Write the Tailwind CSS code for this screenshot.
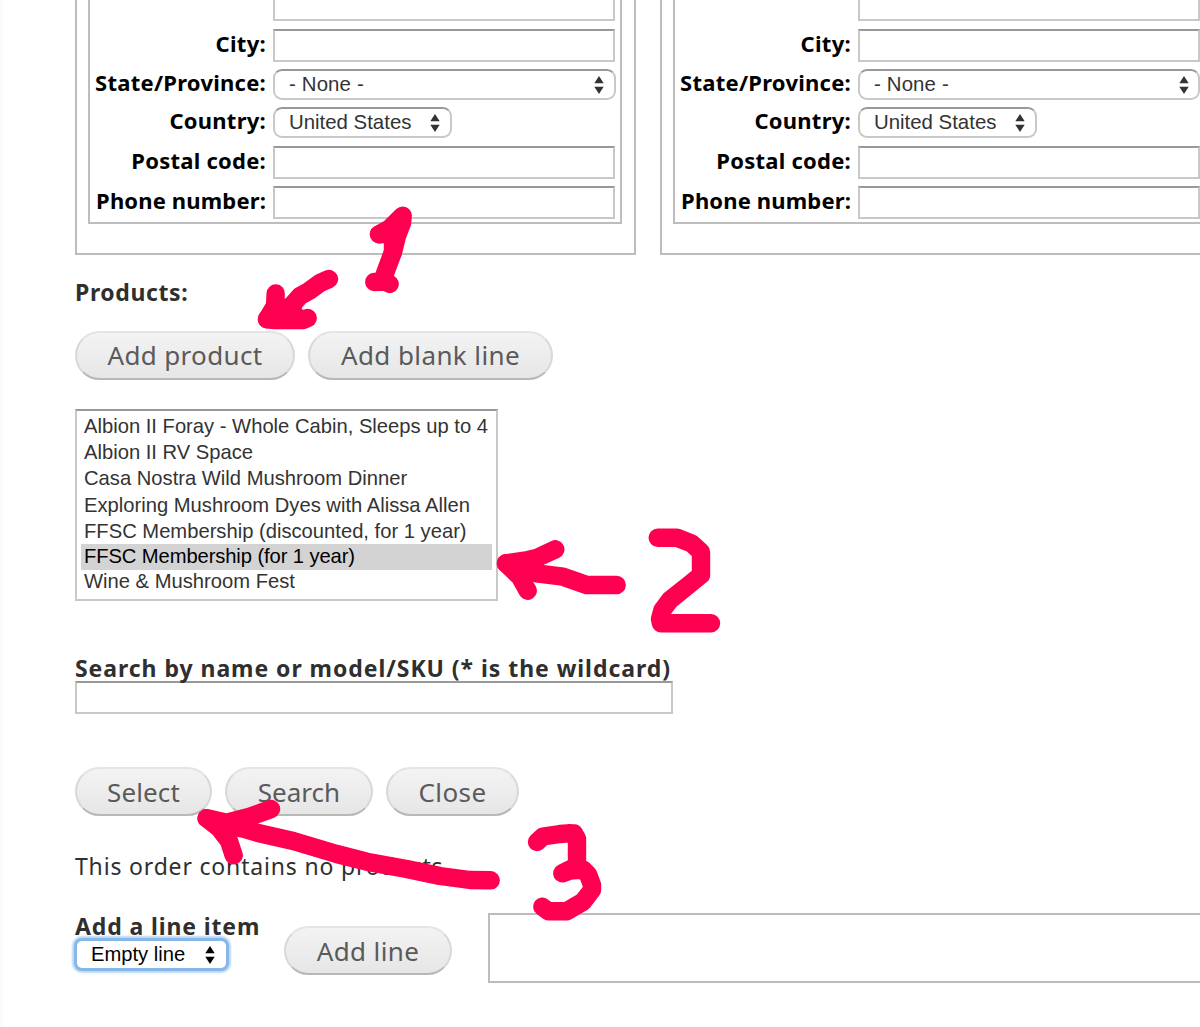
<!DOCTYPE html>
<html lang="en">
<head>
<meta charset="utf-8">
<title>Create order</title>
<script src="https://cdn.jsdelivr.net/npm/@tailwindcss/browser@4"></script>
</head>
<body class="relative h-[1027px] w-[1200px] overflow-hidden bg-white font-['Noto_Sans',sans-serif] text-[23px] leading-[28px] text-[#2f2f2f]">
<main class="flex h-full flex-col border-l-[3px] border-[#fafafa] pl-[72px]">

  <!-- Address fieldsets -->
  <div class="flex h-[255px] gap-6 text-black">
    <section class="h-[255px] w-[561px] shrink-0 border-2 border-t-0 border-[#bdbdbd] pl-[11px]">
      <div class="flex h-[224px] w-[534px] flex-col border-2 border-t-0 border-[#bdbdbd] pl-[5px] text-[22px] font-bold">
        <div class="ml-[178px] h-[21px] w-[342px] border-2 border-t-0 border-[#c8c8c8]"></div>
        <label class="mt-2 flex h-[33px] items-center"><span class="mr-[7px] w-[171px] pb-1.5 text-right whitespace-nowrap tracking-[0.3px]">City:</span><input class="h-[33px] w-[342px] border-2 border-[#c8c8c8] border-t-[#999]"></label>
        <div class="mt-[7px] flex h-[31px] items-center"><span class="mr-[7px] w-[171px] pb-1.5 text-right whitespace-nowrap tracking-[0.25px]">State/Province:</span>
          <div class="flex h-[31px] w-[343px] items-center justify-between rounded-[9px] border-2 border-[#c8c8c8] border-t-[#999] pr-[10px] pl-[14px] font-['Liberation_Sans',sans-serif] text-[20.4px] font-normal text-[#333]"><span class="pb-px tracking-[0.15px]">- None -</span><svg class="h-[18px] w-[10px]" viewBox="0 0 10 18"><path d="M5 0l4.7 7.3H.3zM5 18L.3 10.7h9.4z" fill="#333"/></svg></div></div>
        <div class="mt-[7px] flex h-[31px] items-center"><span class="mr-[7px] w-[171px] pb-1.5 text-right whitespace-nowrap tracking-[0.25px]">Country:</span>
          <div class="flex h-[31px] w-[179px] items-center justify-between rounded-[9px] border-2 border-[#c8c8c8] border-t-[#999] pr-[10px] pl-[14px] font-['Liberation_Sans',sans-serif] text-[20.4px] font-normal text-[#333]"><span class="pb-px">United States</span><svg class="h-[18px] w-[10px]" viewBox="0 0 10 18"><path d="M5 0l4.7 7.3H.3zM5 18L.3 10.7h9.4z" fill="#333"/></svg></div></div>
        <label class="mt-2 flex h-[33px] items-center"><span class="mr-[7px] w-[171px] pb-1.5 text-right whitespace-nowrap tracking-[0.25px]">Postal code:</span><input class="h-[33px] w-[342px] border-2 border-[#c8c8c8] border-t-[#999]"></label>
        <label class="mt-[7px] flex h-[33px] items-center"><span class="mr-[7px] w-[171px] pb-1.5 text-right whitespace-nowrap tracking-[0.15px]">Phone number:</span><input class="h-[33px] w-[342px] border-2 border-[#c8c8c8] border-t-[#999]"></label>
      </div>
    </section>
    <section class="h-[255px] w-[540px] shrink-0 border-b-2 border-l-2 border-[#bdbdbd] pl-[11px]">
      <div class="flex h-[224px] w-[527px] flex-col border-b-2 border-l-2 border-[#bdbdbd] pl-[5px] text-[22px] font-bold">
        <div class="ml-[178px] h-[21px] w-[342px] border-2 border-t-0 border-[#c8c8c8]"></div>
        <label class="mt-2 flex h-[33px] items-center"><span class="mr-[7px] w-[171px] pb-1.5 text-right whitespace-nowrap tracking-[0.3px]">City:</span><input class="h-[33px] w-[342px] border-2 border-[#c8c8c8] border-t-[#999]"></label>
        <div class="mt-[7px] flex h-[31px] items-center"><span class="mr-[7px] w-[171px] pb-1.5 text-right whitespace-nowrap tracking-[0.25px]">State/Province:</span>
          <div class="flex h-[31px] w-[342px] items-center justify-between rounded-[9px] border-2 border-[#c8c8c8] border-t-[#999] pr-[9px] pl-[14px] font-['Liberation_Sans',sans-serif] text-[20.4px] font-normal text-[#333]"><span class="pb-px tracking-[0.15px]">- None -</span><svg class="h-[18px] w-[10px]" viewBox="0 0 10 18"><path d="M5 0l4.7 7.3H.3zM5 18L.3 10.7h9.4z" fill="#333"/></svg></div></div>
        <div class="mt-[7px] flex h-[31px] items-center"><span class="mr-[7px] w-[171px] pb-1.5 text-right whitespace-nowrap tracking-[0.25px]">Country:</span>
          <div class="flex h-[31px] w-[179px] items-center justify-between rounded-[9px] border-2 border-[#c8c8c8] border-t-[#999] pr-[10px] pl-[14px] font-['Liberation_Sans',sans-serif] text-[20.4px] font-normal text-[#333]"><span class="pb-px">United States</span><svg class="h-[18px] w-[10px]" viewBox="0 0 10 18"><path d="M5 0l4.7 7.3H.3zM5 18L.3 10.7h9.4z" fill="#333"/></svg></div></div>
        <label class="mt-2 flex h-[33px] items-center"><span class="mr-[7px] w-[171px] pb-1.5 text-right whitespace-nowrap tracking-[0.25px]">Postal code:</span><input class="h-[33px] w-[342px] border-2 border-[#c8c8c8] border-t-[#999]"></label>
        <label class="mt-[7px] flex h-[33px] items-center"><span class="mr-[7px] w-[171px] pb-1.5 text-right whitespace-nowrap tracking-[0.15px]">Phone number:</span><input class="h-[33px] w-[342px] border-2 border-[#c8c8c8] border-t-[#999]"></label>
      </div>
    </section>
  </div>

  <h2 class="mt-[23px] font-bold tracking-[0.6px]">Products:</h2>
  <div class="mt-[25px] flex gap-[13px] text-[26px] text-[#5a5a5a]">
    <button class="h-[49px] w-[220px] rounded-full border-2 border-[#d8d8d8] border-t-[#e4e4e4] border-b-[#b8b8b8] bg-linear-to-b from-[#f3f3f3] to-[#e6e6e6] pb-[2px] tracking-[0.35px]">Add product</button>
    <button class="h-[49px] w-[245px] rounded-full border-2 border-[#d8d8d8] border-t-[#e4e4e4] border-b-[#b8b8b8] bg-linear-to-b from-[#f3f3f3] to-[#e6e6e6] pb-[2px] tracking-[0.4px]">Add blank line</button>
  </div>

  <!-- Product list box -->
  <ul class="mt-[29px] h-[192px] w-[423px] border-2 border-[#c8c8c8] border-t-[#999] px-1 pt-[3px] font-['Liberation_Sans',sans-serif] text-[20.2px] leading-[24px] whitespace-nowrap text-[#333]">
    <li class="h-[26px] pl-[3px]">Albion II Foray - Whole Cabin, Sleeps up to 4</li>
    <li class="h-[25px] pl-[3px]">Albion II RV Space</li>
    <li class="h-[27px] pl-[3px] leading-[26px]">Casa Nostra Wild Mushroom Dinner</li>
    <li class="h-[26px] pl-[3px] leading-[26px]">Exploring Mushroom Dyes with Alissa Allen</li>
    <li class="h-[26px] pl-[3px] leading-[26px]">FFSC Membership (discounted, for 1 year)</li>
    <li class="h-[26px] bg-[#d3d3d3] pl-[3px] tracking-[-0.1px] text-black">FFSC Membership (for 1 year)</li>
    <li class="h-[26px] pl-[3px] leading-[23px]">Wine &amp; Mushroom Fest</li>
  </ul>

  <div class="mt-[53px]">
    <h2 class="font-bold whitespace-nowrap tracking-[0.95px]">Search by name or model/SKU (* is the wildcard)</h2>
    <input class="-mt-px block h-[33px] w-[598px] border-2 border-[#c8c8c8] border-t-[#999]">
  </div>

  <div class="mt-[53px] flex gap-[13px] text-[26px] text-[#5a5a5a]">
    <button class="h-[49px] w-[137px] rounded-full border-2 border-[#d8d8d8] border-t-[#e4e4e4] border-b-[#b8b8b8] bg-linear-to-b from-[#f3f3f3] to-[#e6e6e6] tracking-[0.1px]">Select</button>
    <button class="h-[49px] w-[148px] rounded-full border-2 border-[#d8d8d8] border-t-[#e4e4e4] border-b-[#b8b8b8] bg-linear-to-b from-[#f3f3f3] to-[#e6e6e6]">Search</button>
    <button class="h-[49px] w-[133px] rounded-full border-2 border-[#d8d8d8] border-t-[#e4e4e4] border-b-[#b8b8b8] bg-linear-to-b from-[#f3f3f3] to-[#e6e6e6] tracking-[0.4px]">Close</button>
  </div>

  <p class="mt-[36px] tracking-[0.82px]">This order contains no products.</p>

  <!-- Line item row -->
  <div class="mt-[32px] flex items-start">
    <div class="w-[209px]">
      <h2 class="font-bold whitespace-nowrap tracking-[0.87px]">Add a line item</h2>
      <div class="mt-px ml-[2px] flex h-[27px] w-[149px] items-center justify-between rounded-[5px] bg-white pr-[11px] pl-[14px] font-['Liberation_Sans',sans-serif] text-[20.2px] text-black shadow-[0_0_0_3px_#86b7e9,0_0_2px_5px_#bad7f5]"><span class="pb-px">Empty line</span><svg class="h-[18px] w-[10px]" viewBox="0 0 10 18"><path d="M5 0l4.7 7.3H.3zM5 18L.3 10.7h9.4z" fill="#000"/></svg></div>
    </div>
    <button class="mt-[14px] h-[49px] w-[168px] rounded-full border-2 border-[#d8d8d8] border-t-[#e4e4e4] border-b-[#b8b8b8] bg-linear-to-b from-[#f3f3f3] to-[#e6e6e6] text-[26px] tracking-[0.4px] text-[#5a5a5a]">Add line</button>
    <div class="mt-px ml-[36px] h-[70px] w-[712px] border-y-2 border-l-2 border-[#bdbdbd]"></div>
  </div>
</main>

<!-- Freehand marker annotations -->
<svg class="pointer-events-none absolute inset-0" width="1200" height="1027" viewBox="0 0 1200 1027" fill="none" stroke="#ff0051" stroke-width="18.4" stroke-linecap="round" stroke-linejoin="round">
  <!-- step 1 -->
  <polyline points="329,279 320,283 309,291 300,296 292,305 284,311 267,319"/>
  <polyline points="275.7,293.5 275,306 267,319.3 275,320 303,320 307.7,318"/>
  <polyline points="276,306 284,308 294,313"/>
  <polyline points="379,234.3 389,229 402.7,215.7 402,223 397,236 393,252 385.5,272 383,280"/>
  <polyline points="379,234.3 394,233 393,243 393,252"/>
  <polyline points="374.3,282 385,281.5 389.7,284"/>
  <!-- step 2 -->
  <polyline points="555.3,549.3 536.7,558 528,560 506,563.3 520,577 527.7,590.7"/>
  <polyline points="506,563.3 524,568 536.7,573.3 563,576.7 586.7,585 616.7,585"/>
  <polyline points="510,564 526,572"/>
  <polyline points="657.7,537.7 676.7,537.7 691.7,543.5 701,552 701,575 690,584 670,600 662.5,610 660,619 661,623.3 711,623.3"/>
  <!-- step 3 -->
  <polyline points="271,809 250,816.7 226.7,822.7 206.7,818.3 219,828 229,841 233.7,855.3"/>
  <polyline points="206.7,818.3 236.7,826.7 258,833 293.3,841 336.7,854 366.7,861.7 406.7,869 440,876 470,880 490.7,880.3"/>
  <polyline points="222,822 240,828"/>
  <polyline points="537,842 543,836.5 560,834 568,833.3 574,833.5 577,839 577,866 562.3,873.3 570,870.5 583,869.5 588.3,875 592,885 592,890 583,901.7 566.7,911.3 548.3,911.3 542.3,906.7"/>
</svg>
</body>
</html>
